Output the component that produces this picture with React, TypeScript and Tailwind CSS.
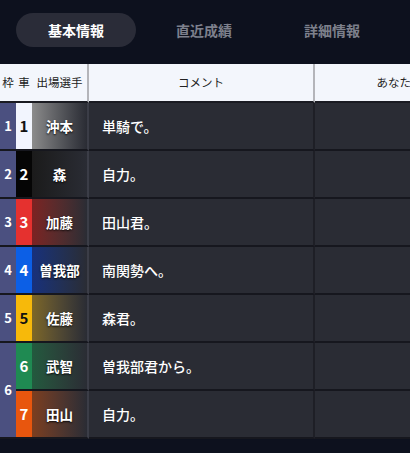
import React from "react";

type Entry = {
  frame: number;
  car: number;
  name: string;
  comment: string;
  carBg: string;
  carText: string;
  nameBg: string;
};

const entries: Entry[] = [
  { frame: 1, car: 1, name: "沖本", comment: "単騎で。", carBg: "bg-[#f2f5fe]", carText: "text-[#111]", nameBg: "bg-gradient-to-r from-[#8c8c8c] to-[#2a2c34]" },
  { frame: 2, car: 2, name: "森", comment: "自力。", carBg: "bg-[#050505]", carText: "text-white", nameBg: "bg-gradient-to-r from-[#1b1b1b] to-[#2a2c34]" },
  { frame: 3, car: 3, name: "加藤", comment: "田山君。", carBg: "bg-[#e5312f]", carText: "text-white", nameBg: "bg-gradient-to-r from-[#7c2222] to-[#2a2c34]" },
  { frame: 4, car: 4, name: "曽我部", comment: "南関勢へ。", carBg: "bg-[#0c5fe6]", carText: "text-white", nameBg: "bg-gradient-to-r from-[#18307c] to-[#2a2c34]" },
  { frame: 5, car: 5, name: "佐藤", comment: "森君。", carBg: "bg-[#f7b90a]", carText: "text-[#111]", nameBg: "bg-gradient-to-r from-[#7d6726] to-[#2a2c34]" },
  { frame: 6, car: 6, name: "武智", comment: "曽我部君から。", carBg: "bg-[#1f8a52]", carText: "text-white", nameBg: "bg-gradient-to-r from-[#225a3e] to-[#2a2c34]" },
  { frame: 6, car: 7, name: "田山", comment: "自力。", carBg: "bg-[#e8560e]", carText: "text-white", nameBg: "bg-gradient-to-r from-[#7c3e1e] to-[#2a2c34]" },
];

const tabs = ["基本情報", "直近成績", "詳細情報"];

export default function App() {
  return (
    <div
      className="h-[453px] w-[410px] overflow-hidden bg-[#0d111e]"
      style={{ fontFamily: '"Noto Sans CJK JP", "Noto Sans", sans-serif' }}
    >
      <div className="flex h-[64px] gap-2 px-4 pt-[13px]">
        {tabs.map((tab, i) => (
          <div
            key={tab}
            className={
              i === 0
                ? "flex h-[34px] w-[120px] items-center justify-center rounded-full bg-[#2a2c38] text-[14px] font-bold text-white"
                : "flex h-[34px] w-[120px] items-center justify-center rounded-full text-[14px] font-bold text-[#7d808c]"
            }
          >
            {tab}
          </div>
        ))}
      </div>

      {/* table is wider than the screen; last column is clipped */}
      <div className="grid w-[515px] grid-cols-[16px_16px_57px_226px_200px] grid-rows-[39px_repeat(7,48px)]">
        <div className="flex items-center justify-center border-b-2 border-[#1a1b22] bg-[#f3f6fc] text-[11.5px] text-[#222]">枠</div>
        <div className="flex items-center justify-center border-b-2 border-[#1a1b22] bg-[#f3f6fc] text-[11.5px] text-[#222]">車</div>
        <div className="flex items-center justify-center border-b-2 border-r-2 border-[#1a1b22] border-r-[#b4b5ba] bg-[#f3f6fc] text-[11.5px] text-[#222]">出場選手</div>
        <div className="flex items-center justify-center border-b-2 border-r-2 border-[#1a1b22] border-r-[#b4b5ba] bg-[#f3f6fc] text-[11.5px] text-[#222]">コメント</div>
        <div className="flex items-center justify-center border-b-2 border-[#1a1b22] bg-[#f3f6fc] pr-[8px] text-[11.5px] text-[#222]">あなたの予想</div>

        {entries.map((e, i) => (
          <React.Fragment key={e.car}>
            {i === 5 ? (
              <div className="row-span-2 flex items-center justify-center border-b-2 border-[#16171e] bg-[#4b5080] text-[13px] font-bold text-white">
                {e.frame}
              </div>
            ) : i === 6 ? null : (
              <div className="flex items-center justify-center border-b-2 border-[#16171e] bg-[#4b5080] text-[13px] font-bold text-white">
                {e.frame}
              </div>
            )}
            <div className={`flex items-center justify-center border-b-2 border-[#16171e] text-[15px] font-bold ${e.carBg} ${e.carText}`}>
              {e.car}
            </div>
            <div className={`flex items-center justify-center border-b-2 border-r-2 border-[#16171e] border-r-[#3b3d47] text-[13.5px] font-bold text-white [text-shadow:0_1px_2px_rgba(0,0,0,0.9)] ${e.nameBg}`}>
              {e.name}
            </div>
            <div className="flex items-center border-b-2 border-r-2 border-[#16171e] border-r-[#1e1f26] bg-[#2a2c34] pl-[13px] text-[14px] font-medium text-white">
              {e.comment}
            </div>
            <div className="border-b-2 border-[#16171e] bg-[#2a2c34]" />
          </React.Fragment>
        ))}
      </div>
    </div>
  );
}
